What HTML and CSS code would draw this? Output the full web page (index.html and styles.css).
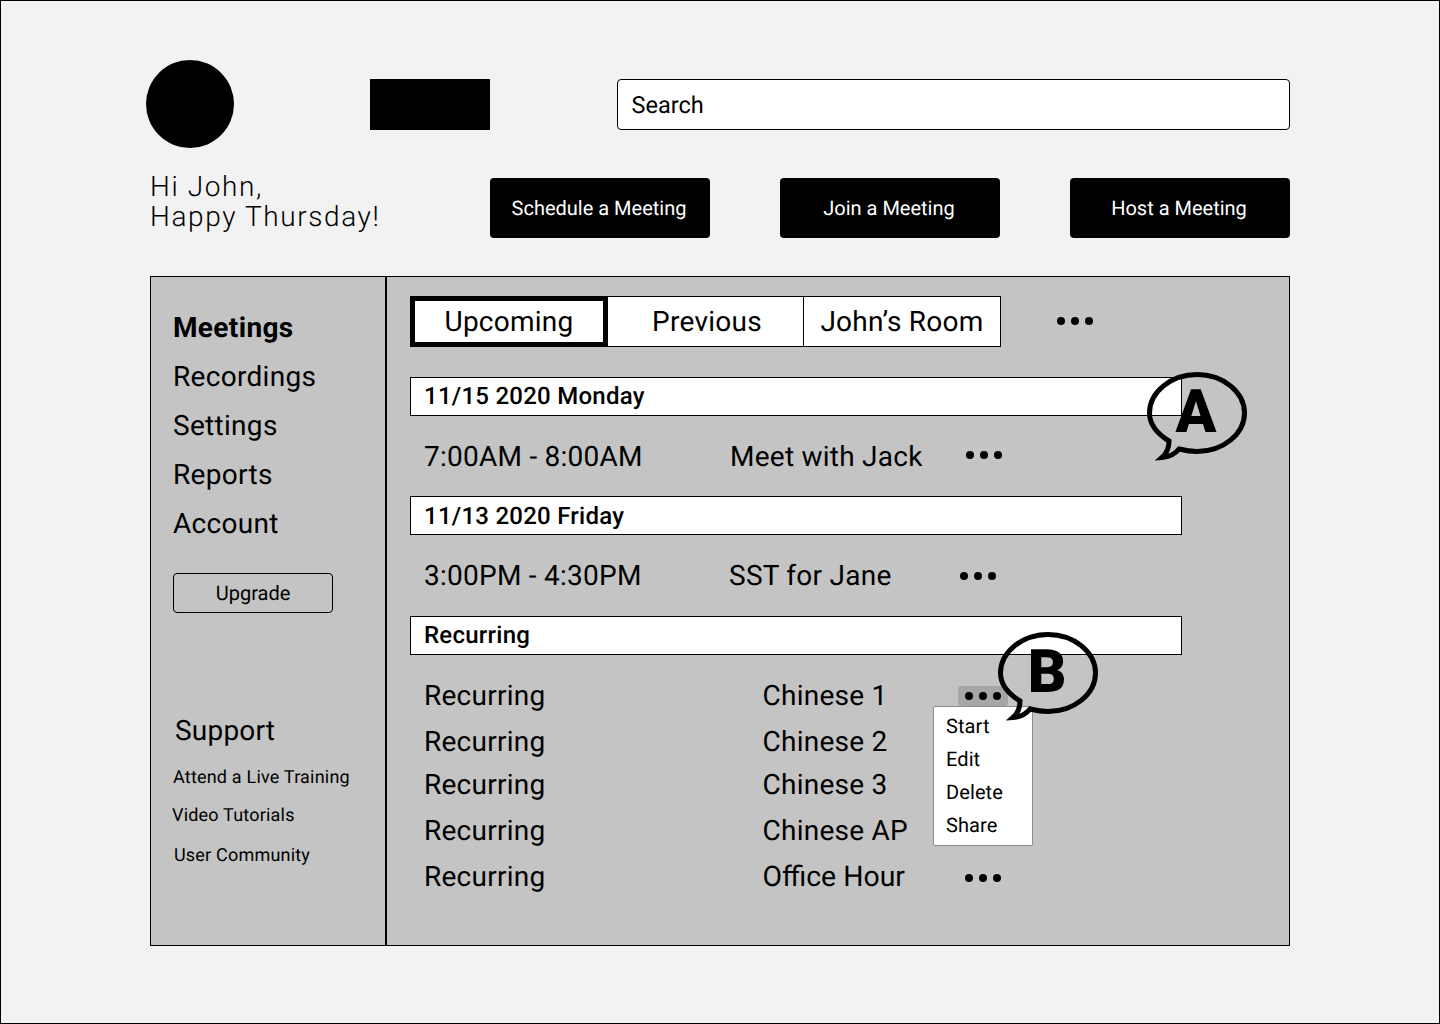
FILE: index.html
```html
<!doctype html>
<html lang="en">
<head>
  <meta charset="UTF-8">
  <meta name="viewport" content="width=device-width, initial-scale=1.0">
  <title>Meetings</title>
  <link rel="stylesheet" href="styles.css">
</head>
<body>
  <div class="frame">
    <header class="topbar">
      <div class="avatar"></div>
      <div class="logo"></div>
      <div class="search">Search</div>
    </header>

    <section class="welcome">
      <p class="greeting">Hi John,<br>Happy Thursday!</p>
      <div class="actions">
        <button class="action">Schedule a Meeting</button>
        <button class="action">Join a Meeting</button>
        <button class="action">Host a Meeting</button>
      </div>
    </section>

    <section class="panel">
      <nav class="sidebar">
        <ul class="nav">
          <li class="nav-on">Meetings</li>
          <li>Recordings</li>
          <li>Settings</li>
          <li>Reports</li>
          <li>Account</li>
        </ul>
        <button class="upgrade">Upgrade</button>
        <h2 class="support">Support</h2>
        <a class="help help-1">Attend a Live Training</a>
        <a class="help help-2">Video Tutorials</a>
        <a class="help help-3">User Community</a>
      </nav>

      <main class="content">
        <div class="tabs">
          <div class="tab tab-on">Upcoming</div>
          <div class="tab tab-prev">Previous</div>
          <div class="tab tab-room">John’s Room</div>
          <div class="dots tabs-more"><i></i><i></i><i></i></div>
        </div>

        <h3 class="day day-first">11/15 2020 Monday</h3>
        <div class="row row-tall">
          <span class="time time-a">7:00AM - 8:00AM</span>
          <span class="title title-a">Meet with Jack</span>
          <div class="dots dots-up"><i></i><i></i><i></i></div>
        </div>

        <h3 class="day day-friday">11/13 2020 Friday</h3>
        <div class="row row-tall row-b">
          <span class="time time-b">3:00PM - 4:30PM</span>
          <span class="title title-b">SST for Jane</span>
          <div class="dots"><i></i><i></i><i></i></div>
        </div>

        <h3 class="day">Recurring</h3>
        <div class="list">
          <div class="row">
            <span class="time">Recurring</span>
            <span class="title">Chinese 1</span>
            <div class="more">
              <div class="dots dots-on"><i></i><i></i><i></i></div>
              <ul class="menu">
                <li>Start</li>
                <li>Edit</li>
                <li>Delete</li>
                <li>Share</li>
              </ul>
            </div>
          </div>
          <div class="row row-tight">
            <span class="time">Recurring</span>
            <span class="title">Chinese 2</span>
          </div>
          <div class="row">
            <span class="time">Recurring</span>
            <span class="title">Chinese 3</span>
          </div>
          <div class="row">
            <span class="time">Recurring</span>
            <span class="title">Chinese AP</span>
          </div>
          <div class="row">
            <span class="time">Recurring</span>
            <span class="title title-office">Office Hour</span>
            <div class="dots dots-down"><i></i><i></i><i></i></div>
          </div>
        </div>
      </main>
    </section>

    <div class="callout callout-a">
      <svg width="104" height="92" viewBox="0 0 104 92">
        <path d="M25 71 C12 63 5.5 54 5.5 43 C5.5 22 27 4.5 53 4.5 C79 4.5 100.5 22 100.5 43 C100.5 64 79 81.5 53 81.5 C47 81.5 41 80.5 35 79 C31 84 25 87 18 87.5 C22 84 25 78 25 71 Z" fill="none" stroke="#000" stroke-width="5"/>
      </svg>
      <span>A</span>
    </div>
    <div class="callout callout-b">
      <svg width="104" height="92" viewBox="0 0 104 92">
        <path d="M25 71 C12 63 5.5 54 5.5 43 C5.5 22 27 4.5 53 4.5 C79 4.5 100.5 22 100.5 43 C100.5 64 79 81.5 53 81.5 C47 81.5 41 80.5 35 79 C31 84 25 87 18 87.5 C22 84 25 78 25 71 Z" fill="none" stroke="#000" stroke-width="5"/>
      </svg>
      <span>B</span>
    </div>
  </div>
</body>
</html>
```

FILE: styles.css
```css
* { box-sizing: border-box; }
html, body { margin: 0; padding: 0; }
body { font-family: Roboto, 'Liberation Sans', sans-serif; color: #000; text-rendering: geometricPrecision; }
ul { list-style: none; margin: 0; padding: 0; }
button { font-family: inherit; color: inherit; cursor: pointer; text-rendering: inherit; }

.frame { position: relative; width: 1440px; height: 1024px; background: #f2f2f2; border: 1px solid #000; padding: 59px 149px 0; }

.topbar { display: flex; align-items: flex-start; height: 88px; }
.avatar { width: 88px; height: 88px; margin-left: -4px; border-radius: 50%; background: #000; }
.logo { width: 120px; height: 51px; margin: 19px 0 0 136px; background: #000; }
.search { width: 673px; height: 51px; margin: 19px 0 0 127px; padding: 1px 0 0 13.5px; background: #fff; border: 1px solid #000; border-radius: 4px; font-size: 23.5px; line-height: 49px; }

.welcome { display: flex; justify-content: space-between; align-items: center; height: 60px; margin: 30px 0 38px; }
.greeting { margin: -12px 0 0; font-size: 28px; line-height: 30px; letter-spacing: 1.6px; font-weight: 300; }
.actions { display: flex; gap: 70px; }
.action { width: 220px; height: 60px; padding: 0 2px 0 0; background: #000; color: #fff; border: none; border-radius: 4px; font-size: 20px; }

.panel { display: flex; width: 1140px; height: 670px; background: #c4c4c4; border: 1px solid #000; }

.sidebar { width: 236px; padding: 26px 0 0 22px; border-right: 2px solid #000; }
.nav li { height: 49px; font-size: 28px; line-height: 49px; letter-spacing: .3px; }
.nav .nav-on { font-weight: 700; letter-spacing: .35px; }
.upgrade { display: block; width: 160px; height: 40px; margin-top: 25px; background: none; border: 1px solid #000; border-radius: 4px; font-size: 20px; }
.support { margin: 98px 0 0 2px; font-size: 28px; line-height: 40px; font-weight: 400; letter-spacing: .2px; }
.help { display: block; font-size: 18px; line-height: 24px; letter-spacing: .2px; }
.help-1 { margin-top: 15px; }
.help-2 { margin-top: 14px; margin-left: -1px; }
.help-3 { margin-top: 16px; margin-left: 1px; }

.content { flex: 1; padding: 19px 0 0 23px; }

.tabs { display: flex; align-items: center; height: 51px; }
.tab { height: 51px; background: #fff; border: 1px solid #000; border-left: none; text-align: center; font-size: 28px; line-height: 49px; letter-spacing: .25px; }
.tab-on { width: 198px; border: 5px solid #000; line-height: 41px; }
.tab-prev { width: 196px; padding-left: 3px; }
.tab-room { width: 197px; }
.tabs-more { margin-left: 56px; margin-top: -2px; }

.dots { display: flex; gap: 6px; }
.dots i { width: 8px; height: 8px; border-radius: 50%; background: #000; }
.dots-up { margin-top: -2px; }
.dots-down { margin-top: 4px; }

.day { width: 772px; height: 39px; margin: 0; padding-left: 13px; background: #fff; border: 1px solid #000; font-size: 24px; line-height: 37px; font-weight: 500; letter-spacing: .25px; }
.day-first { margin-top: 30px; }
.day-friday { padding-top: 1px; }

.row { display: flex; align-items: center; height: 46px; padding-left: 14px; font-size: 28px; letter-spacing: .25px; }
.row-tall { height: 80px; }
.row-b { height: 81px; }
.row-tight { margin-bottom: -3px; }
.time { width: 338.5px; }
.time-a { width: 306px; }
.time-b { width: 305px; }
.title { width: 202.5px; }
.title-a { width: 236px; }
.title-b { width: 231px; }
.title-office { font-size: 28.4px; letter-spacing: 0; }
.list { margin-top: 17px; }

.more { position: relative; margin-top: 2px; }
.dots-on { width: 50px; height: 20px; margin-left: -7px; padding-left: 7px; align-items: center; background: #a6a6a6; border-radius: 3px; }
.menu { position: absolute; left: -32px; top: 20px; width: 100px; height: 140px; padding: 3px 0 0 12px; background: #fff; border: 1px solid #8c8c8c; border-radius: 2px; z-index: 1; font-size: 20px; letter-spacing: .1px; }
.menu li { height: 33px; line-height: 33px; }

.callout { position: absolute; width: 104px; height: 92px; z-index: 2; }
.callout svg { position: absolute; left: 0; top: 0; }
.callout span { position: absolute; left: 0; right: 0; top: 7px; text-align: center; font-size: 60px; line-height: 70px; font-weight: 900; }
.callout-a { left: 1143px; top: 369px; }
.callout-b { left: 994px; top: 629px; }
```
